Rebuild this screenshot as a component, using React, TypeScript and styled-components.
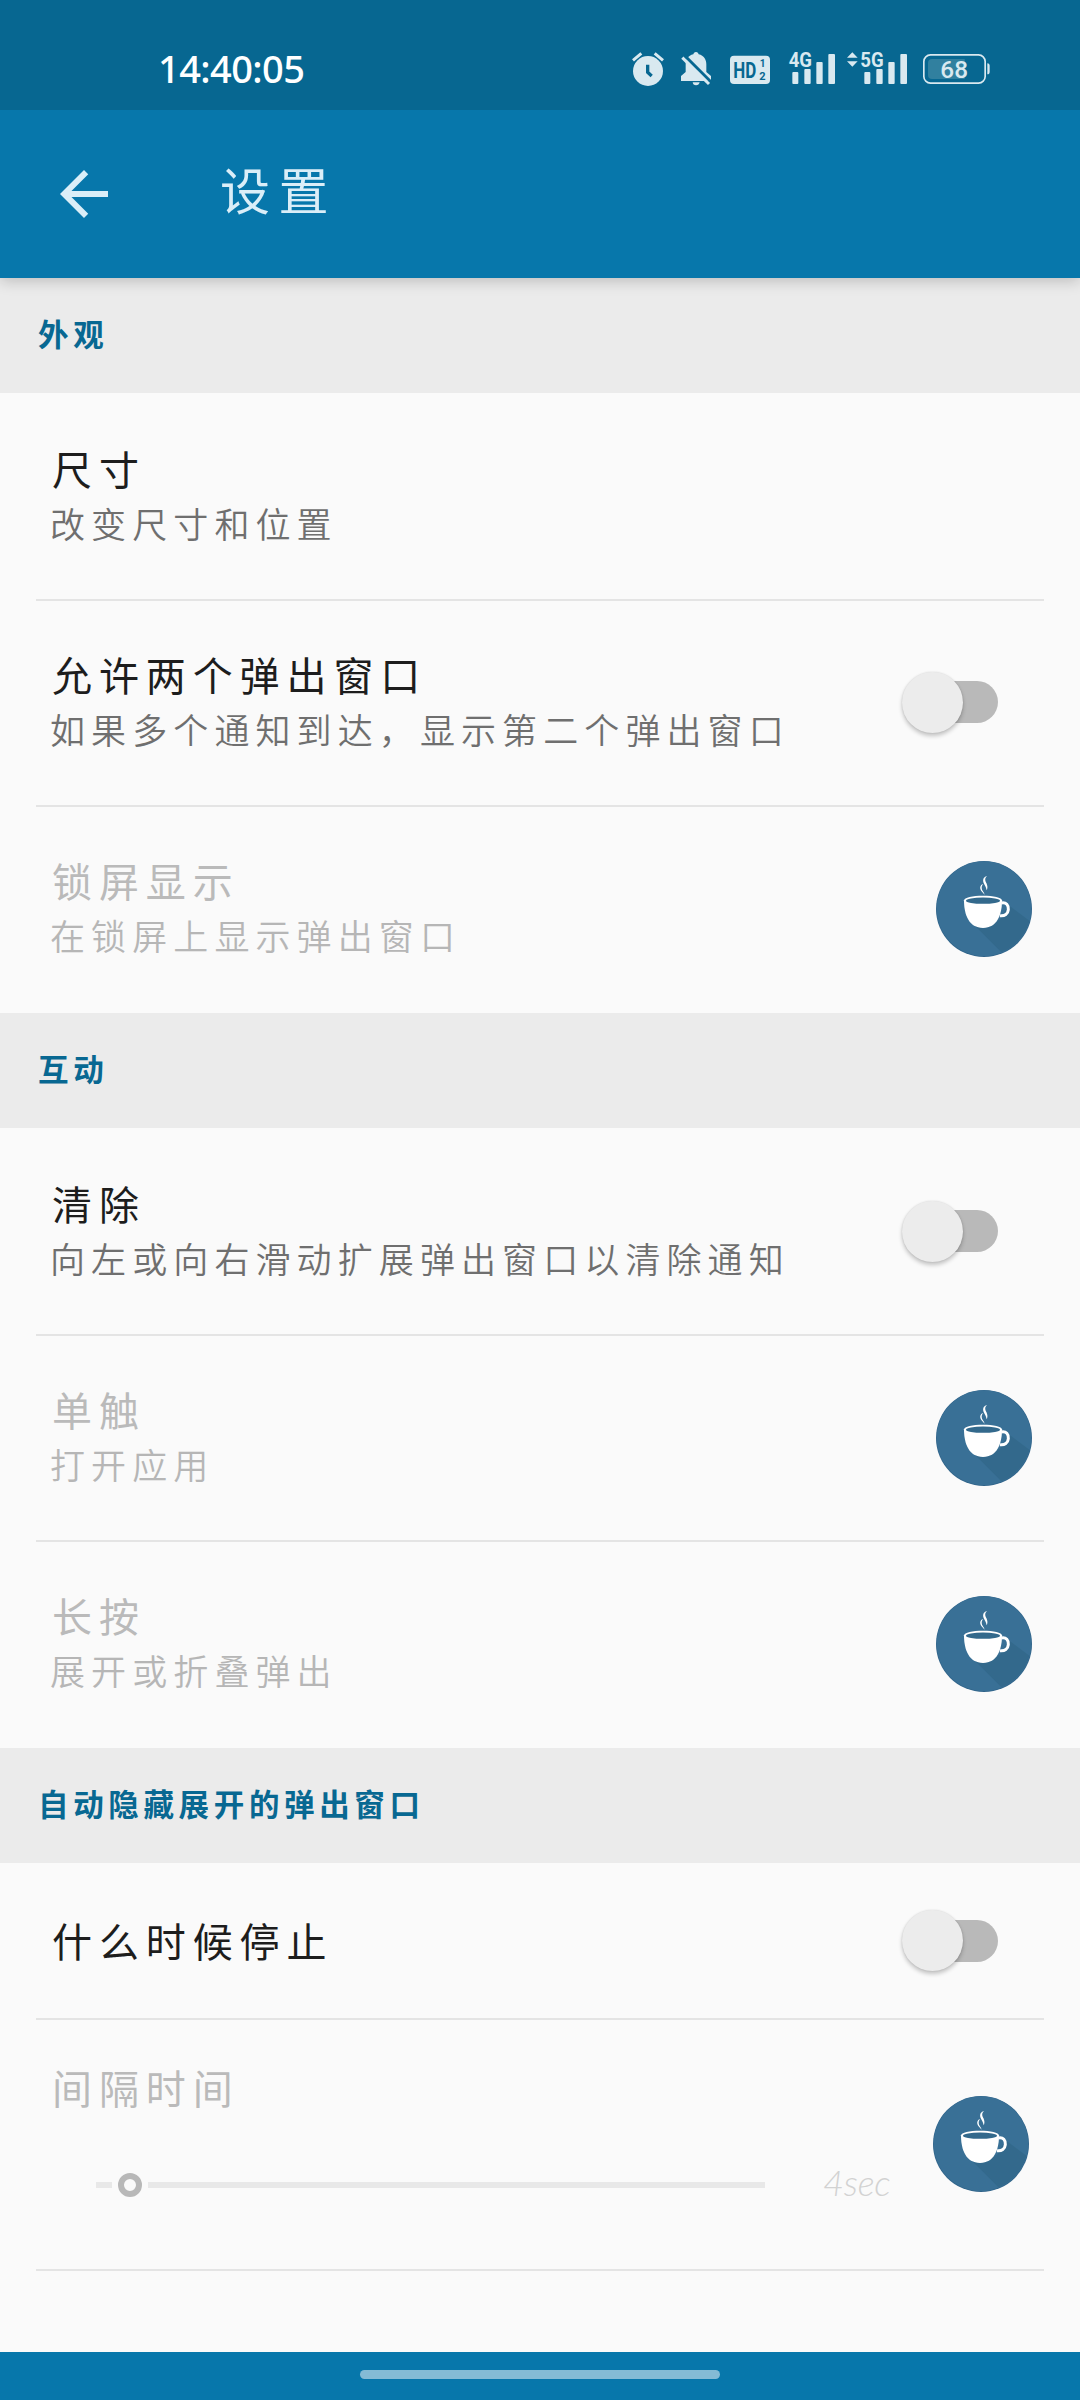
import React from "react";
import styled, { createGlobalStyle } from "styled-components";

const Global = createGlobalStyle`
  *, *::before, *::after { box-sizing: border-box; }
  body { margin: 0; background: #fafafa; }
`;

const cjk = `"Noto Sans CJK SC", sans-serif`;

const Screen = styled.div`
  width: 1080px;
  height: 2400px;
  display: flex;
  flex-direction: column;
  background: #fafafa;
  font-family: ${cjk};
  overflow: hidden;
`;

const StatusBar = styled.header`
  flex: none;
  height: 110px;
  padding: 28px 90px 0 158px;
  display: flex;
  align-items: center;
  justify-content: space-between;
  background: #076791;
  position: relative;
  z-index: 2;
`;

const Clock = styled.time`
  padding-bottom: 2px;
  font: 500 38px/44px "Noto Sans", sans-serif;
  letter-spacing: -0.6px;
  color: #fff;
`;

const StatusIcons = styled.div`
  display: flex;
  align-items: center;
`;

const Glyph = styled.svg<{ $gap?: number }>`
  display: block;
  height: 36px;
  margin-left: ${(p) => p.$gap ?? 0}px;
  fill: #d9e9f0;
  overflow: visible;
  font-family: Roboto, sans-serif;
`;

const AppBar = styled.div`
  flex: none;
  height: 168px;
  padding-left: 48px;
  display: flex;
  align-items: center;
  background: #0777ab;
  box-shadow: 0 3px 14px rgba(0, 0, 0, 0.2);
  position: relative;
  z-index: 1;
`;

const BackButton = styled.button`
  width: 72px;
  height: 72px;
  padding: 0;
  border: 0;
  background: none;
  svg { display: block; fill: #daeef8; }
`;

const ScreenTitle = styled.h1`
  margin: 0 0 0 100px;
  padding-bottom: 12px;
  font-size: 50px;
  line-height: 72px;
  font-weight: 400;
  letter-spacing: 8.4px;
  color: #daeef8;
`;

const Content = styled.main`
  flex: 1;
  min-height: 0;
`;

const SectionHeader = styled.h2`
  margin: 0;
  height: 115px;
  padding: 0 38px 5px;
  display: flex;
  align-items: center;
  background: #ebebeb;
  color: #086892;
  font-size: 30.5px;
  font-weight: 700;
  letter-spacing: 4.65px;
`;

const Items = styled.div`
  padding-bottom: 2px;
`;

const Divider = styled.hr`
  height: 2px;
  margin: 0 36px -2px;
  border: 0;
  background: #e4e4e4;
`;

const Row = styled.div<{ $height?: number }>`
  height: ${(p) => p.$height ?? 206}px;
  padding-left: 50px;
  display: flex;
  align-items: center;
  justify-content: space-between;
`;

const Texts = styled.div`
  padding-bottom: 1px;
  display: flex;
  flex-direction: column;
`;

const Title = styled.div<{ $disabled?: boolean }>`
  padding-left: 2px;
  font-size: 40px;
  line-height: 54px;
  font-weight: 400;
  letter-spacing: 6.9px;
  color: ${(p) => (p.$disabled ? "#bababa" : "#1d1d1d")};
`;

const Summary = styled.div<{ $disabled?: boolean }>`
  font-size: 35px;
  line-height: 55px;
  font-weight: 350;
  letter-spacing: 6.1px;
  color: ${(p) => (p.$disabled ? "#b6b6b6" : "#6f6f6f")};
`;

const Track = styled.button`
  width: 84px;
  height: 42px;
  margin-right: 82px;
  padding: 0;
  border: 0;
  border-radius: 21px;
  background: #b9b9b9;
  display: flex;
  align-items: center;
`;

const Thumb = styled.span`
  flex: none;
  width: 61px;
  height: 61px;
  margin-left: -12px;
  border-radius: 50%;
  background: #ececec;
  box-shadow: 0 3px 4px rgba(0, 0, 0, 0.22), 0 0 2px rgba(0, 0, 0, 0.12);
`;

const BadgeSvg = styled.svg<{ $right: number; $drop: number }>`
  display: block;
  flex: none;
  width: 96px;
  height: 96px;
  margin: ${(p) => p.$drop}px ${(p) => p.$right}px 0 0;
`;

const SliderBlock = styled.div`
  height: 100%;
  padding-top: 42px;
  display: flex;
  flex-direction: column;
  gap: 41px;
`;

const SliderLine = styled.div`
  height: 60px;
  margin-left: 46px;
  display: flex;
  align-items: center;
`;

const Rail = styled.span<{ $width: number }>`
  width: ${(p) => p.$width}px;
  height: 6px;
  background: #e8e8e8;
`;

const Knob = styled.span`
  width: 24px;
  height: 24px;
  margin: 0 6px;
  border: 6px solid #b8b8b8;
  border-radius: 50%;
`;

const SliderValue = styled.output`
  margin-left: 58px;
  padding-bottom: 7px;
  font: italic 300 36px/44px Lato, sans-serif;
  letter-spacing: -0.2px;
  color: #d2d2d2;
`;

const NavBar = styled.footer`
  flex: none;
  height: 48px;
  padding-top: 18px;
  display: flex;
  justify-content: center;
  background: #0777ab;
`;

const Pill = styled.span`
  width: 360px;
  height: 9px;
  border-radius: 5px;
  background: #84bbd5;
`;

function Toggle() {
  return (
    <Track role="switch" aria-checked="false">
      <Thumb />
    </Track>
  );
}

function CoffeeBadge({ right = 48, drop = 2 }: { right?: number; drop?: number }) {
  return (
    <BadgeSvg viewBox="108 63 288 288" $right={right} $drop={drop}>
      <circle cx="252" cy="207" r="144" fill="#31648a" />
      <circle cx="252" cy="206" r="142" fill="#397096" />
      <path d="M325 195 L388 242 A142 142 0 0 1 304 337 L225 257 L300 240Z" fill="#33698c" />
      <path
        d="M192 181C192 173 218 167 249 167S306 173 306 181C306 225 291 264 249 264S192 225 192 181Z"
        fill="#fff"
      />
      <ellipse cx="249" cy="182" rx="51" ry="9.5" fill="#33698c" />
      <path
        d="M304 189C319 186 326 196 325 209C324 222 314 229 300 227"
        fill="none"
        stroke="#fff"
        strokeWidth="9"
      />
      <path d="M261 108C249 111 247 122 252 131C256 139 259 143 260 151C265 141 261 132 257 125C254 119 256 112 261 108Z" fill="#fff" />
      <path d="M249 132C239 136 239 146 244 153L254 164C252 156 245 151 245 144C245 139 247 136 249 132Z" fill="#fff" />
    </BadgeSvg>
  );
}

function Bars({ x }: { x: number }) {
  return (
    <g>
      <rect x={x} y="126" width="18" height="36" rx="3" />
      <rect x={x + 36} y="117" width="19" height="45" rx="3" />
      <rect x={x + 72} y="96" width="19" height="66" rx="3" />
      <rect x={x + 108} y="72" width="20" height="90" rx="3" />
    </g>
  );
}

function StatusGlyphs() {
  return (
    <StatusIcons>
      <Glyph viewBox="96 63 96 108" width="32">
        <circle cx="144" cy="123" r="45" />
        <path d="M99 91L124 70M164 70L189 91" stroke="#d9e9f0" strokeWidth="9" />
        <path d="M143 104V127L155 138" stroke="#076791" strokeWidth="10" fill="none" />
      </Glyph>
      <Glyph viewBox="243 63 93 108" width="31" $gap={17}>
        <path d="M288 66C293 66 295 69 296 73C312 77 319 89 319 103V126L333 138V153H243V138L257 126V103C257 89 264 77 280 73C281 69 283 66 288 66Z" />
        <path d="M278 157H299Q297 166 288 166T278 157Z" />
        <path d="M247 70L334 157" stroke="#076791" strokeWidth="9" />
        <path d="M247 83L327 162" stroke="#d9e9f0" strokeWidth="9" />
      </Glyph>
      <Glyph viewBox="390 63 120 108" width="40" $gap={18}>
        <rect x="390" y="77" width="120" height="85" rx="12" />
        <g fill="#076791" fontWeight="700">
          <text x="400" y="144" fontSize="68" textLength="69" lengthAdjust="spacingAndGlyphs">HD</text>
          <text x="479" y="112" fontSize="30">1</text>
          <text x="478" y="151" fontSize="33">2</text>
        </g>
      </Glyph>
      <Glyph viewBox="567 63 138 108" width="46" $gap={19}>
        <Bars x={577} />
        <text x="566" y="111" fontSize="60" fontWeight="700" textLength="70" lengthAdjust="spacingAndGlyphs" stroke="#076791" strokeWidth="6" paintOrder="stroke">4G</text>
      </Glyph>
      <Glyph viewBox="741 63 180 108" width="60" $gap={12}>
        <path d="M757 67L773 83H741ZM741 94H773L757 110Z" />
        <Bars x={793} />
        <text x="781" y="111" fontSize="60" fontWeight="700" textLength="70" lengthAdjust="spacingAndGlyphs" stroke="#076791" strokeWidth="6" paintOrder="stroke">5G</text>
      </Glyph>
      <Glyph viewBox="969 63 201 108" width="67" $gap={16}>
        <rect x="971.5" y="74.5" width="184" height="85" rx="20" fill="none" stroke="#d9e9f0" strokeWidth="5" />
        <path d="M996 87H1094V147H996Q984 147 984 135V99Q984 87 996 87Z" fill="#31809f" />
        <path d="M1162 100Q1169 100 1169 108V125Q1169 133 1162 133Z" />
        <text x="1021" y="144" fontSize="71" fontWeight="500" textLength="83" lengthAdjust="spacingAndGlyphs">68</text>
      </Glyph>
    </StatusIcons>
  );
}

type Item = { title: string; summary?: string; disabled?: boolean; control?: "toggle" | "badge"; height?: number };

const groups: { name: string; items: Item[] }[] = [
  {
    name: "外观",
    items: [
      { title: "尺寸", summary: "改变尺寸和位置" },
      { title: "允许两个弹出窗口", summary: "如果多个通知到达，显示第二个弹出窗口", control: "toggle" },
      { title: "锁屏显示", summary: "在锁屏上显示弹出窗口", disabled: true, control: "badge" },
    ],
  },
  {
    name: "互动",
    items: [
      { title: "清除", summary: "向左或向右滑动扩展弹出窗口以清除通知", control: "toggle" },
      { title: "单触", summary: "打开应用", disabled: true, control: "badge" },
      { title: "长按", summary: "展开或折叠弹出", disabled: true, control: "badge" },
    ],
  },
];

function Setting({ title, summary, disabled, control, height }: Item) {
  return (
    <Row $height={height}>
      <Texts>
        <Title $disabled={disabled}>{title}</Title>
        {summary && <Summary $disabled={disabled}>{summary}</Summary>}
      </Texts>
      {control === "toggle" && <Toggle />}
      {control === "badge" && <CoffeeBadge />}
    </Row>
  );
}

export default function App() {
  return (
    <Screen lang="zh-CN">
      <Global />
      <StatusBar>
        <Clock>14:40:05</Clock>
        <StatusGlyphs />
      </StatusBar>
      <AppBar>
        <BackButton aria-label="返回">
          <svg width="72" height="72" viewBox="0 0 24 24">
            <path d="M20 11H7.83l5.59-5.59L12 4l-8 8 8 8 1.41-1.41L7.83 13H20v-2z" />
          </svg>
        </BackButton>
        <ScreenTitle>设置</ScreenTitle>
      </AppBar>
      <Content>
        {groups.map((group) => (
          <section key={group.name}>
            <SectionHeader>{group.name}</SectionHeader>
            <Items>
              {group.items.map((item, i) => (
                <React.Fragment key={item.title}>
                  {i > 0 && <Divider />}
                  <Setting {...item} />
                </React.Fragment>
              ))}
            </Items>
          </section>
        ))}
        <section>
          <SectionHeader>自动隐藏展开的弹出窗口</SectionHeader>
          <Setting title="什么时候停止" control="toggle" height={155} />
          <Divider />
          <Row $height={251}>
            <SliderBlock>
              <Title $disabled>间隔时间</Title>
              <SliderLine>
                <Rail $width={16} />
                <Knob />
                <Rail $width={617} />
                <SliderValue>4sec</SliderValue>
              </SliderLine>
            </SliderBlock>
            <CoffeeBadge right={51} drop={0} />
          </Row>
          <Divider />
        </section>
      </Content>
      <NavBar>
        <Pill />
      </NavBar>
    </Screen>
  );
}
